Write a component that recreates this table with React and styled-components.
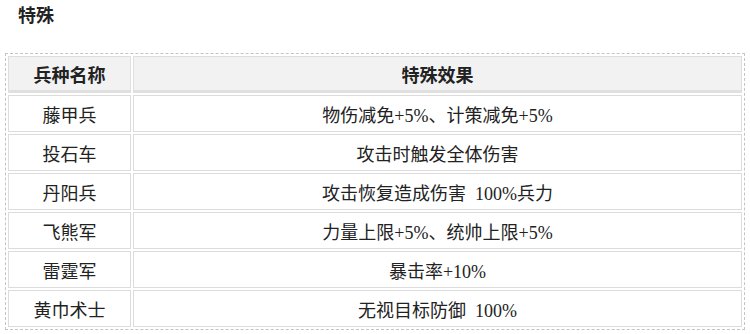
import React from 'react'
import styled, { createGlobalStyle } from 'styled-components'

const Global = createGlobalStyle`
body{
margin:0;
background:#fff;
font-family:"Liberation Serif","Noto Sans CJK SC",serif;
color:#222;
}
`;
const Page = styled.div`
padding:2px 5px 0 5px;
`;
const Heading = styled.h3`
margin:0 0 27px 13px;
font-size:18px;
line-height:24px;
font-weight:700;
font-family:"Noto Sans CJK SC",sans-serif;
color:#222;
`;
const Table = styled.table`
width:740px;
border:1px dashed #c4c4c4;
border-spacing:2px;
`;
const Head = styled.th`
height:33px;
padding:0;
border:1px solid #dedede;
border-bottom:3px solid #e0e0e0;
background:#f2f2f2;
font-size:18px;
font-weight:700;
font-family:"Noto Sans CJK SC",sans-serif;
width:${(props)=>props.narrow ? "121px" : "auto"};
`;
const Cell = styled.td`
height:35px;
padding:0;
border:1px solid #dcdcdc;
text-align:center;
font-size:18px;
color:#222;
white-space:pre;
`;

const rows = [
  ["藤甲兵", "物伤减免+5%、计策减免+5%"],
  ["投石车", "攻击时触发全体伤害"],
  ["丹阳兵", "攻击恢复造成伤害  100%兵力"],
  ["飞熊军", "力量上限+5%、统帅上限+5%"],
  ["雷霆军", "暴击率+10%"],
  ["黄巾术士", "无视目标防御  100%"],
];

const App = () => {
  return (
    <Page>
      <Global />
      <Heading>特殊</Heading>
      <Table>
        <thead>
          <tr>
            <Head narrow>兵种名称</Head>
            <Head>特殊效果</Head>
          </tr>
        </thead>
        <tbody>
          {rows.map(([name, effect]) => (
            <tr key={name}>
              <Cell>{name}</Cell>
              <Cell>{effect}</Cell>
            </tr>
          ))}
        </tbody>
      </Table>
    </Page>
  )
}

export default App
